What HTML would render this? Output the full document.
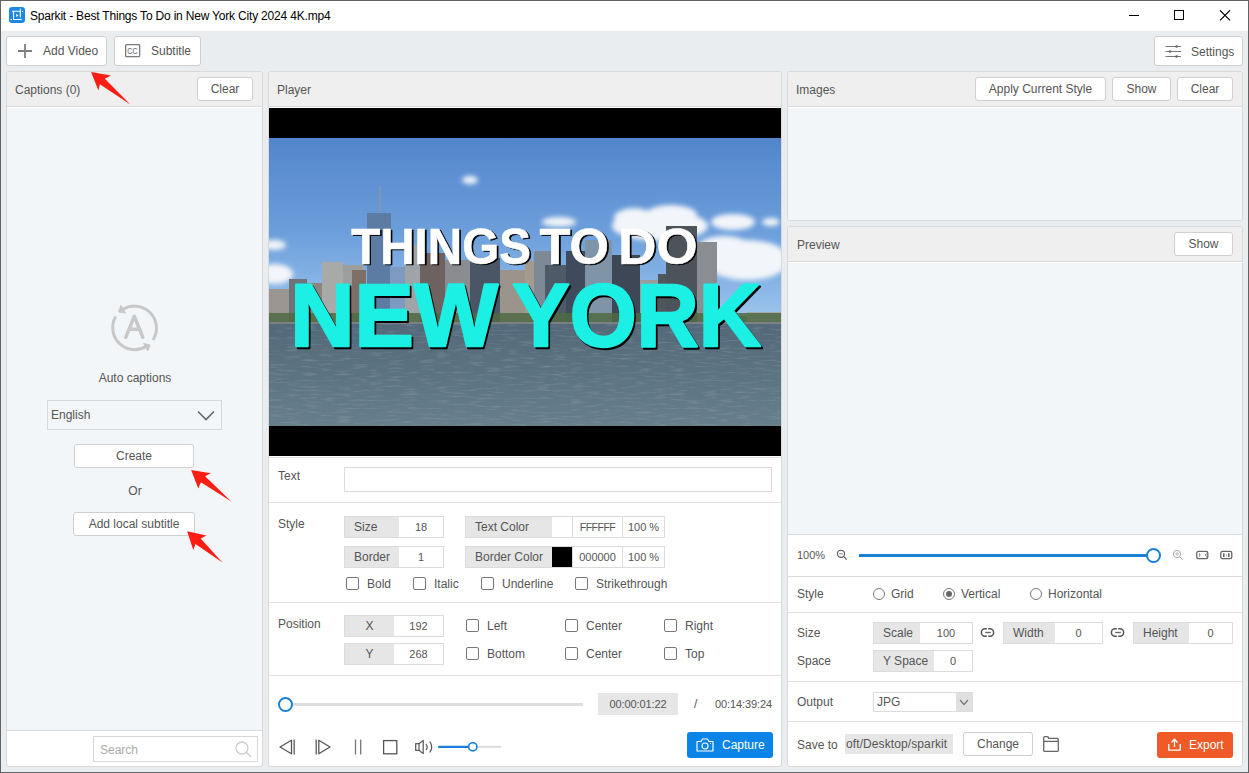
<!DOCTYPE html>
<html><head><meta charset="utf-8">
<style>
*{box-sizing:border-box;margin:0;padding:0}
html,body{width:1249px;height:773px;overflow:hidden}
body{position:relative;background:#e9edf0;font-family:"Liberation Sans",sans-serif;font-size:12px;color:#555}
.a{position:absolute}
.win{left:0;top:0;width:1249px;height:773px;border:1px solid #606264;pointer-events:none;z-index:50}
.title{left:1px;top:1px;width:1247px;height:30px;background:#fff}
.btn{position:absolute;background:#fff;border:1px solid #cfcfcf;border-radius:3px;color:#555;white-space:nowrap}
.panel{position:absolute;border:1px solid #d9d9d9;border-radius:3px;overflow:hidden;background:#fff}
.hdr{position:absolute;left:0;top:0;right:0;height:35px;background:#efefef;border-bottom:1px solid #dadada}
.cnt{position:absolute;left:0;right:0;background:#f3f6f9}
.t{position:absolute;white-space:nowrap;line-height:14px}
.sep{position:absolute;left:0;right:0;height:1px;background:#e2e2e2}
.lbox{position:absolute;border:1px solid #dcdcdc;background:#fff}
.lbl{position:absolute;left:0;top:0;bottom:0;background:#e6e6e6;text-align:left;padding-left:9px;line-height:20px}
.lc{text-align:center;padding-left:0}
.val{font-size:11px}
.val{position:absolute;top:0;bottom:0;right:0;text-align:center;line-height:20px;color:#555}
.cb{position:absolute;width:13px;height:13px;border:1px solid #777;border-radius:2px;background:#fff}
.rd{position:absolute;width:12px;height:12px;border:1px solid #777;border-radius:50%;background:#fff}
</style></head><body>
<div class="a win"></div>
<div class="a title"></div>

<!-- title bar -->
<svg class="a" style="left:9px;top:7px" width="16" height="16" viewBox="0 0 16 16">
<rect x="0" y="0" width="16" height="16" rx="3.2" fill="#1b88e3"/>
<path d="M3 4.3H11.5M11.3 3V10.5M4.5 4.3V12.5H12.8" fill="none" stroke="#fff" stroke-width="1.1"/>
<path d="M7.1 6.9V10.1L9.7 8.5Z" fill="#fff"/>
<circle cx="11.4" cy="2.2" r="0.65" fill="#fff"/><circle cx="13.6" cy="4.4" r="0.6" fill="#fff"/><circle cx="2.2" cy="12.5" r="0.7" fill="#fff"/>
</svg>
<div class="t" style="left:30px;top:9px;color:#000;letter-spacing:-0.19px">Sparkit - Best Things To Do in New York City 2024 4K.mp4</div>
<svg class="a" style="left:1129px;top:10px" width="110" height="12" viewBox="0 0 110 12">
<path d="M0 5.5H10" stroke="#000" stroke-width="1"/>
<rect x="45.5" y="0.5" width="9" height="9" fill="none" stroke="#000" stroke-width="1"/>
<path d="M91 0.3L101 10.3M101 0.3L91 10.3" stroke="#000" stroke-width="1.15"/>
</svg>

<!-- toolbar -->
<div class="btn" style="left:6px;top:36px;width:101px;height:30px">
 <svg class="a" style="left:11px;top:7px" width="14" height="14" viewBox="0 0 14 14"><path d="M7 0V14M0 7H14" stroke="#7d7d7d" stroke-width="1.8"/></svg>
 <div class="t" style="left:36px;top:7px">Add Video</div>
</div>
<div class="btn" style="left:114px;top:36px;width:87px;height:30px">
 <svg class="a" style="left:10px;top:7px" width="17" height="14" viewBox="0 0 17 14"><rect x="0.65" y="0.65" width="14" height="12" rx="0.8" fill="none" stroke="#7a7a7a" stroke-width="1.3"/><text x="7.6" y="10.2" font-family="Liberation Sans" font-size="9.6" fill="#666" text-anchor="middle" textLength="10.5" lengthAdjust="spacingAndGlyphs">CC</text></svg>
 <div class="t" style="left:36px;top:7px">Subtitle</div>
</div>
<div class="btn" style="left:1154px;top:36px;width:89px;height:30px">
 <svg class="a" style="left:10px;top:8px" width="17" height="14" viewBox="0 0 17 14">
 <path d="M0.5 1.5H16M0.5 6.5H16M0.5 11.5H16" stroke="#777" stroke-width="1.2"/>
 <circle cx="11.5" cy="1.5" r="1.3" fill="#666"/><circle cx="5" cy="6.5" r="1.3" fill="#666"/><circle cx="11.5" cy="11.5" r="1.3" fill="#666"/>
 </svg>
 <div class="t" style="left:36px;top:8px">Settings</div>
</div>

<!-- left panel -->
<div class="panel" style="left:6px;top:71px;width:257px;height:696px">
 <div class="hdr"><div class="t" style="left:8px;top:11px">Captions (0)</div>
  <div class="btn" style="left:190px;top:5px;width:56px;height:24px"><div class="t" style="left:0;right:0;text-align:center;top:4px">Clear</div></div>
 </div>
 <div class="cnt" style="top:36px;height:623px;border-bottom:1px solid #dadada">
  <svg class="a" style="left:99px;top:192px" width="56" height="56" viewBox="0 0 56 56">
   <path d="M16.5 9.6 A22 22 0 0 1 47.55 39" fill="none" stroke="#c8c8c8" stroke-width="3" stroke-linecap="round"/>
   <path d="M9.08 17.67 A22 22 0 0 0 40.5 46.2" fill="none" stroke="#c8c8c8" stroke-width="3" stroke-linecap="round"/>
   <path d="M14.9 5.3 L12.6 12 L19.6 13 Z" fill="#c8c8c8" stroke="#c8c8c8" stroke-width="1" stroke-linejoin="round"/>
   <path d="M37.6 43.5 L44.2 45 L41.6 51 Z" fill="#c8c8c8" stroke="#c8c8c8" stroke-width="1" stroke-linejoin="round"/>
   <path d="M19.8 37.3 L28.3 16.2 L36.8 37.3 M22.8 29.3H33.8" fill="none" stroke="#c8c8c8" stroke-width="3.5" stroke-linecap="round" stroke-linejoin="round"/>
  </svg>
  <div class="t" style="left:1px;width:254px;text-align:center;top:263px">Auto captions</div>
  <div class="a" style="left:40px;top:292px;width:175px;height:30px;border:1px solid #d8d8d8;background:#f3f6f9">
   <div class="t" style="left:3px;top:7px">English</div>
   <svg class="a" style="left:149px;top:9px" width="18" height="11" viewBox="0 0 18 11"><path d="M1 1.5L9 9.5L17 1.5" fill="none" stroke="#666" stroke-width="1.6"/></svg>
  </div>
  <div class="btn" style="left:67px;top:336px;width:120px;height:24px"><div class="t" style="left:0;right:0;text-align:center;top:4px">Create</div></div>
  <div class="t" style="left:1px;width:254px;text-align:center;top:376px">Or</div>
  <div class="btn" style="left:66px;top:404px;width:122px;height:24px"><div class="t" style="left:0;right:0;text-align:center;top:4px">Add local subtitle</div></div>
 </div>
 <div class="a" style="left:86px;top:664px;width:165px;height:26px;border:1px solid #d8d8d8;background:#fff">
  <div class="t" style="left:6px;top:6px;color:#aaa">Search</div>
  <svg class="a" style="left:141px;top:4px" width="18" height="17" viewBox="0 0 18 17"><circle cx="7" cy="7" r="6" fill="none" stroke="#ccc" stroke-width="1.3"/><path d="M11.3 11.3L16 16" stroke="#ccc" stroke-width="1.3"/></svg>
 </div>
</div>

<!-- player panel -->
<div class="panel" style="left:268px;top:71px;width:514px;height:696px">
 <div class="hdr"><div class="t" style="left:8px;top:11px">Player</div></div>
 <div class="a" id="video" style="left:0;top:36px;width:512px;height:348px;background:#000;overflow:hidden"><svg class="a" style="left:0;top:0" width="512" height="348" viewBox="0 0 512 348">
<defs>
 <linearGradient id="sky" x1="0" y1="30" x2="0" y2="216" gradientUnits="userSpaceOnUse">
  <stop offset="0" stop-color="#5385cc"/><stop offset="0.5" stop-color="#6c9edb"/><stop offset="0.85" stop-color="#8ebae8"/><stop offset="1" stop-color="#a6c8ec"/>
 </linearGradient>
 <linearGradient id="water" x1="0" y1="216" x2="0" y2="318" gradientUnits="userSpaceOnUse">
  <stop offset="0" stop-color="#53697a"/><stop offset="0.5" stop-color="#5c7381"/><stop offset="1" stop-color="#677e8b"/>
 </linearGradient>
 <filter id="blur" x="-50%" y="-50%" width="200%" height="200%"><feGaussianBlur stdDeviation="2.5"/></filter>
 <filter id="noise" filterUnits="userSpaceOnUse" x="0" y="216" width="512" height="102"><feTurbulence type="fractalNoise" baseFrequency="0.06 0.5" numOctaves="2" seed="3"/><feColorMatrix values="0 0 0 0 0.75  0 0 0 0 0.82  0 0 0 0 0.86  0 0 0 1.4 -0.7"/></filter>
</defs>
<rect x="0" y="30" width="512" height="288" fill="url(#sky)"/>
<g filter="url(#blur)" fill="#f2f5f9">
 <ellipse cx="391" cy="118" rx="48" ry="15"/><ellipse cx="365" cy="110" rx="20" ry="10"/><ellipse cx="402" cy="107" rx="26" ry="10"/>
 <ellipse cx="464" cy="114" rx="22" ry="8"/>
 <ellipse cx="478" cy="152" rx="42" ry="20"/><ellipse cx="455" cy="138" rx="25" ry="10"/>
 <ellipse cx="290" cy="114" rx="17" ry="5"/>
 <ellipse cx="502" cy="114" rx="9" ry="4"/>
 <ellipse cx="201" cy="72" rx="8" ry="4"/>
 <ellipse cx="5" cy="137" rx="12" ry="5"/><ellipse cx="6" cy="166" rx="18" ry="10"/>
</g>
<rect x="0" y="181" width="26" height="35" fill="#9a9590"/><rect x="20" y="171" width="18" height="45" fill="#6f7377"/><rect x="38" y="175" width="15" height="41" fill="#8c8580"/><rect x="53" y="154" width="21" height="62" fill="#a8aaa8"/><rect x="74" y="157" width="21" height="59" fill="#9d9f9e"/><rect x="83" y="162" width="14" height="54" fill="#7d6e66"/><rect x="98" y="105" width="24" height="111" fill="#5d7ca3"/><rect x="121" y="159" width="15" height="57" fill="#7e9ac0"/><rect x="136" y="137" width="15" height="79" fill="#9fa4a9"/><rect x="151" y="145" width="25" height="71" fill="#6e6260"/><rect x="176" y="152" width="25" height="64" fill="#8a8c90"/><rect x="201" y="150" width="30" height="66" fill="#4a5566"/><rect x="231" y="162" width="25" height="54" fill="#9a948c"/><rect x="256" y="153" width="20" height="63" fill="#a39b90"/><rect x="265" y="143" width="17" height="73" fill="#7d8a96"/><rect x="276" y="157" width="21" height="59" fill="#4e5a68"/><rect x="297" y="143" width="19" height="73" fill="#3f4a5c"/><rect x="316" y="132" width="27" height="84" fill="#8094a8"/><rect x="343" y="147" width="28" height="69" fill="#3d4755"/><rect x="371" y="172" width="18" height="44" fill="#9a9c9e"/><rect x="389" y="166" width="8" height="50" fill="#50565e"/><rect x="397" y="118" width="31" height="98" fill="#4d535b"/><rect x="428" y="134" width="20" height="82" fill="#8a8e92"/><rect x="448" y="208" width="30" height="8" fill="#6f7f6a"/><rect x="478" y="204" width="34" height="12" fill="#a4a8ab"/>
<path d="M111 78V105" stroke="#8a96a6" stroke-width="1.6"/>
<rect x="0" y="205" width="512" height="11" fill="#4f6a43" opacity="0.85"/>
<rect x="0" y="214" width="512" height="2" fill="#7a8084"/>
<rect x="0" y="216" width="512" height="102" fill="url(#water)"/>
<rect x="0" y="216" width="512" height="102" filter="url(#noise)" opacity="0.3"/>
<g font-family="Liberation Sans" font-weight="bold" stroke-linejoin="round"><text x="83.87" y="157.20" font-size="49.8" textLength="179.85" lengthAdjust="spacingAndGlyphs" fill="#000" stroke="#000" stroke-width="0.6">THINGS</text><text x="272.21" y="157.20" font-size="49.8" textLength="69.54" lengthAdjust="spacingAndGlyphs" fill="#000" stroke="#000" stroke-width="0.6">TO</text><text x="350.90" y="157.20" font-size="49.8" textLength="79.34" lengthAdjust="spacingAndGlyphs" fill="#000" stroke="#000" stroke-width="0.6">DO</text><text x="22.97" y="239.80" font-size="88.1" textLength="207.61" lengthAdjust="spacingAndGlyphs" fill="#000" stroke="#000" stroke-width="2.4">NEW</text><text x="244.92" y="239.80" font-size="88.1" textLength="248.72" lengthAdjust="spacingAndGlyphs" fill="#000" stroke="#000" stroke-width="2.4">YORK</text><text x="82.17" y="155.5" font-size="49.8" textLength="179.85" lengthAdjust="spacingAndGlyphs" fill="#fff" stroke="#fff" stroke-width="0.6">THINGS</text><text x="270.51" y="155.5" font-size="49.8" textLength="69.54" lengthAdjust="spacingAndGlyphs" fill="#fff" stroke="#fff" stroke-width="0.6">TO</text><text x="349.2" y="155.5" font-size="49.8" textLength="79.34" lengthAdjust="spacingAndGlyphs" fill="#fff" stroke="#fff" stroke-width="0.6">DO</text><text x="21.27" y="238.1" font-size="88.1" textLength="207.61" lengthAdjust="spacingAndGlyphs" fill="#1cf0e4" stroke="#1cf0e4" stroke-width="2.4">NEW</text><text x="243.22" y="238.1" font-size="88.1" textLength="248.72" lengthAdjust="spacingAndGlyphs" fill="#1cf0e4" stroke="#1cf0e4" stroke-width="2.4">YORK</text></g>
</svg></div>
 <div class="sep" style="top:385px;background:#dfe1e4"></div>
 <div class="t" style="left:9px;top:397px">Text</div>
 <div class="a" style="left:75px;top:395px;width:428px;height:25px;border:1px solid #dcdcdc"></div>
 <div class="sep" style="top:430px"></div>
 <div class="t" style="left:9px;top:445px">Style</div>
 <div class="lbox" style="left:75px;top:444px;width:100px;height:22px"><div class="lbl" style="width:54px">Size</div><div class="val" style="left:54px">18</div></div>
 <div class="lbox" style="left:75px;top:474px;width:100px;height:22px"><div class="lbl" style="width:54px">Border</div><div class="val" style="left:54px">1</div></div>
 <div class="lbox" style="left:196px;top:444px;width:200px;height:22px">
  <div class="lbl" style="width:86px">Text Color</div>
  <div class="a" style="left:86px;top:0;bottom:0;width:21px;border-right:1px solid #dcdcdc"></div>
  <div class="val" style="left:107px;width:50px;right:auto;border-right:1px solid #dcdcdc;letter-spacing:-0.5px;font-size:10.5px">FFFFFF</div>
  <div class="val" style="left:157px">100 %</div>
 </div>
 <div class="lbox" style="left:196px;top:474px;width:200px;height:22px">
  <div class="lbl" style="width:86px">Border Color</div>
  <div class="a" style="left:86px;top:0;bottom:0;width:21px;background:#000;border-right:1px solid #dcdcdc"></div>
  <div class="val" style="left:107px;width:50px;right:auto;border-right:1px solid #dcdcdc">000000</div>
  <div class="val" style="left:157px">100 %</div>
 </div>
 <div class="cb" style="left:77px;top:505px"></div><div class="t" style="left:98px;top:505px">Bold</div>
 <div class="cb" style="left:144px;top:505px"></div><div class="t" style="left:165px;top:505px">Italic</div>
 <div class="cb" style="left:212px;top:505px"></div><div class="t" style="left:233px;top:505px">Underline</div>
 <div class="cb" style="left:306px;top:505px"></div><div class="t" style="left:327px;top:505px">Strikethrough</div>
 <div class="sep" style="top:530px"></div>
 <div class="t" style="left:9px;top:545px">Position</div>
 <div class="lbox" style="left:75px;top:543px;width:100px;height:22px"><div class="lbl lc" style="width:49px">X</div><div class="val" style="left:49px">192</div></div>
 <div class="lbox" style="left:75px;top:571px;width:100px;height:22px"><div class="lbl lc" style="width:49px">Y</div><div class="val" style="left:49px">268</div></div>
 <div class="cb" style="left:197px;top:547px"></div><div class="t" style="left:218px;top:547px">Left</div>
 <div class="cb" style="left:296px;top:547px"></div><div class="t" style="left:317px;top:547px">Center</div>
 <div class="cb" style="left:395px;top:547px"></div><div class="t" style="left:416px;top:547px">Right</div>
 <div class="cb" style="left:197px;top:575px"></div><div class="t" style="left:218px;top:575px">Bottom</div>
 <div class="cb" style="left:296px;top:575px"></div><div class="t" style="left:317px;top:575px">Center</div>
 <div class="cb" style="left:395px;top:575px"></div><div class="t" style="left:416px;top:575px">Top</div>
 <div class="sep" style="top:603px"></div>
 <!-- seek -->
 <div class="a" style="left:16px;top:631px;width:298px;height:3px;background:#dedede"></div>
 <div class="a" style="left:9px;top:625px;width:15px;height:15px;border:2.5px solid #1a7fd6;border-radius:50%;background:#fff"></div>
 <div class="a" style="left:329px;top:621px;width:80px;height:22px;background:#e6e6e6"><div class="t" style="left:0;right:0;text-align:center;top:4px;font-size:11px;letter-spacing:-0.1px">00:00:01:22</div></div>
 <div class="t" style="left:425px;top:625px">/</div>
 <div class="t" style="left:446px;top:625px;font-size:11px;letter-spacing:-0.1px">00:14:39:24</div>
 <!-- controls -->
 
 <div class="a" style="left:418px;top:660px;width:86px;height:26px;background:#0a84e6;border-radius:3px">
  <svg class="a" style="left:9px;top:6px" width="18" height="14" viewBox="0 0 18 14"><path d="M1 3.5H5L6.5 1H11.5L13 3.5H17V13H1Z" fill="none" stroke="#fff" stroke-width="1.2" stroke-linejoin="round"/><circle cx="9" cy="8" r="3" fill="none" stroke="#fff" stroke-width="1.2"/><circle cx="14.5" cy="5.5" r="0.6" fill="#fff"/></svg>
  <div class="t" style="left:35px;top:6px;color:#fff">Capture</div>
 </div>
</div>

<!-- images panel -->
<div class="panel" style="left:787px;top:71px;width:456px;height:150px">
 <div class="hdr"><div class="t" style="left:8px;top:11px">Images</div>
  <div class="btn" style="left:187px;top:5px;width:131px;height:24px"><div class="t" style="left:0;right:0;text-align:center;top:4px">Apply Current Style</div></div>
  <div class="btn" style="left:324px;top:5px;width:59px;height:24px"><div class="t" style="left:0;right:0;text-align:center;top:4px">Show</div></div>
  <div class="btn" style="left:389px;top:5px;width:56px;height:24px"><div class="t" style="left:0;right:0;text-align:center;top:4px">Clear</div></div>
 </div>
 <div class="cnt" style="top:36px;bottom:0"></div>
</div>
<!-- preview panel -->
<div class="panel" style="left:787px;top:226px;width:456px;height:541px">
 <div class="hdr"><div class="t" style="left:9px;top:11px">Preview</div>
  <div class="btn" style="left:386px;top:5px;width:59px;height:24px"><div class="t" style="left:0;right:0;text-align:center;top:4px">Show</div></div>
 </div>
 <div class="cnt" style="top:36px;height:272px;border-bottom:1px solid #dadada"></div>
 <div class="t" style="left:9px;top:321px;font-size:11px">100%</div>
 <svg class="a" style="left:48px;top:322px" width="12" height="12" viewBox="0 0 12 12"><circle cx="5" cy="4.8" r="3.6" fill="none" stroke="#555" stroke-width="1.1"/><path d="M7.6 7.4L10.6 10.6" stroke="#555" stroke-width="1.1"/><path d="M3.2 4.8H6.8" stroke="#999" stroke-width="1.3"/></svg>
 <div class="a" style="left:71px;top:327px;width:296px;height:3px;background:#1a7fd6"></div>
 <div class="a" style="left:358px;top:321px;width:15px;height:15px;border:2.5px solid #1a7fd6;border-radius:50%;background:#fff"></div>
 <svg class="a" style="left:384px;top:322px" width="12" height="12" viewBox="0 0 12 12"><circle cx="5" cy="5" r="3.7" fill="none" stroke="#aaa" stroke-width="1"/><path d="M7.7 7.7L10.8 10.8" stroke="#aaa" stroke-width="1"/><path d="M3.3 5H6.7M5 3.3V6.7" stroke="#bbb" stroke-width="1.2"/></svg>
 <svg class="a" style="left:407px;top:322px" width="14" height="12" viewBox="0 0 14 12"><rect x="1.8" y="2.4" width="11" height="7.3" rx="1.6" fill="none" stroke="#666" stroke-width="1.3"/><path d="M3.9 4.2L4.8 5V7.1L3.9 7.9M11.7 4.2L10.8 5V7.1L11.7 7.9" fill="none" stroke="#777" stroke-width="1"/></svg>
 <svg class="a" style="left:431px;top:322px" width="14" height="12" viewBox="0 0 14 12"><rect x="1.8" y="2.4" width="11" height="7.3" rx="1.6" fill="none" stroke="#666" stroke-width="1.3"/><path d="M4.8 4.3V8M9.8 4.3V8" stroke="#555" stroke-width="1.4"/><path d="M7.3 4.8V7.6" stroke="#bbb" stroke-width="0.9"/></svg>
 <div class="sep" style="top:349px;background:#dadada"></div>
 <div class="t" style="left:9px;top:360px">Style</div>
 <div class="rd" style="left:85px;top:361px"></div><div class="t" style="left:103px;top:360px">Grid</div>
 <div class="rd" style="left:155px;top:361px"></div><div class="a" style="left:158px;top:364px;width:6px;height:6px;border-radius:50%;background:#666"></div><div class="t" style="left:173px;top:360px">Vertical</div>
 <div class="rd" style="left:242px;top:361px"></div><div class="t" style="left:260px;top:360px">Horizontal</div>
 <div class="sep" style="top:385px"></div>
 <div class="t" style="left:9px;top:399px">Size</div>
 <div class="lbox" style="left:85px;top:395px;width:100px;height:22px"><div class="lbl" style="width:46px">Scale</div><div class="val" style="left:46px">100</div></div>
 <svg class="a" style="left:192px;top:401px" width="16" height="10" viewBox="0 0 16 10"><path d="M6.8 0.75H5.1A3.75 3.75 0 0 0 5.1 8.25H6.8M8.2 0.75H9.9A3.75 3.75 0 0 1 9.9 8.25H8.2" fill="none" stroke="#555" stroke-width="1.5"/><path d="M5.2 4.5H10.8" stroke="#666" stroke-width="1.4"/></svg>
 <div class="lbox" style="left:215px;top:395px;width:100px;height:22px"><div class="lbl" style="width:51px">Width</div><div class="val" style="left:51px">0</div></div>
 <svg class="a" style="left:322px;top:401px" width="16" height="10" viewBox="0 0 16 10"><path d="M6.8 0.75H5.1A3.75 3.75 0 0 0 5.1 8.25H6.8M8.2 0.75H9.9A3.75 3.75 0 0 1 9.9 8.25H8.2" fill="none" stroke="#555" stroke-width="1.5"/><path d="M5.2 4.5H10.8" stroke="#666" stroke-width="1.4"/></svg>
 <div class="lbox" style="left:345px;top:395px;width:100px;height:22px"><div class="lbl" style="width:55px">Height</div><div class="val" style="left:55px">0</div></div>
 <div class="t" style="left:9px;top:427px">Space</div>
 <div class="lbox" style="left:85px;top:423px;width:100px;height:22px"><div class="lbl" style="width:60px">Y Space</div><div class="val" style="left:60px">0</div></div>
 <div class="sep" style="top:454px"></div>
 <div class="t" style="left:9px;top:468px">Output</div>
 <div class="a" style="left:85px;top:465px;width:100px;height:20px;border:1px solid #dcdcdc">
  <div class="t" style="left:3px;top:2px">JPG</div>
  <div class="a" style="right:0;top:0;bottom:0;width:16px;background:#e0e0e0"><svg class="a" style="left:3px;top:6px" width="10" height="7" viewBox="0 0 10 7"><path d="M1 1L5 5.5L9 1" fill="none" stroke="#777" stroke-width="1.2"/></svg></div>
 </div>
 <div class="sep" style="top:494px"></div>
 <div class="t" style="left:9px;top:511px">Save to</div>
 <div class="a" style="left:57px;top:507px;width:108px;height:20px;background:#e6e6e6;overflow:hidden"><div class="t" style="left:1px;top:3px;letter-spacing:0.1px">oft/Desktop/sparkit</div></div>
 <div class="btn" style="left:175px;top:505px;width:70px;height:24px"><div class="t" style="left:0;right:0;text-align:center;top:4px">Change</div></div>
 <svg class="a" style="left:254px;top:508px" width="18" height="18" viewBox="0 0 18 18"><path d="M1.7 15.6V2.6Q1.7 1.6 2.7 1.6H5.3Q6 1.6 6.3 2.4L6.6 3.3H15.3Q16.3 3.3 16.3 4.3V15.6Q16.3 16.3 15.6 16.3H2.4Q1.7 16.3 1.7 15.6ZM1.7 6.4H16.3" fill="none" stroke="#666" stroke-width="1.3"/></svg>
 <div class="a" style="left:369px;top:505px;width:76px;height:26px;background:#f05a28;border-radius:3px">
  <svg class="a" style="left:11px;top:6px" width="13" height="13" viewBox="0 0 13 13"><path d="M0.8 6V12.2H12.2V6" fill="none" stroke="#fff" stroke-width="1.3"/><path d="M6.5 9V1.5M3.5 4.5L6.5 1.3L9.5 4.5" fill="none" stroke="#fff" stroke-width="1.3"/></svg>
  <div class="t" style="left:32px;top:6px;color:#fff">Export</div>
 </div>
</div>
<svg class="a" style="left:269px;top:730px;z-index:5" width="240" height="30" viewBox="0 0 240 30">
  <path d="M11 17L22.5 10.2V23.8Z" fill="none" stroke="#555" stroke-width="1.3" stroke-linejoin="round"/><path d="M25.2 9.5V24.5" stroke="#666" stroke-width="1.4"/>
  <path d="M47.2 9.5V24.5" stroke="#666" stroke-width="1.4"/><path d="M49.8 10.2L61 17L49.8 23.8Z" fill="none" stroke="#555" stroke-width="1.3" stroke-linejoin="round"/>
  <path d="M86.5 9.5V24.5M91.7 9.5V24.5" stroke="#777" stroke-width="1.3"/>
  <rect x="114.6" y="10.6" width="13.2" height="13.2" fill="none" stroke="#555" stroke-width="1.3"/>
  <rect x="146.7" y="13.7" width="3.3" height="6.6" fill="none" stroke="#555" stroke-width="1.2"/>
  <path d="M150 13.7L154.2 10.4V23.6L150 20.3" fill="none" stroke="#555" stroke-width="1.2" stroke-linejoin="round"/>
  <path d="M157 14Q159.3 17 157 20M160.8 11.5Q164.6 17 160.8 22.5" fill="none" stroke="#555" stroke-width="1.2"/>
  <path d="M169.2 16.8H203" stroke="#1a7fd6" stroke-width="2.3"/>
  <path d="M208 16.8H232" stroke="#dcdcdc" stroke-width="2"/>
  <circle cx="203.8" cy="16.8" r="4.1" fill="#fff" stroke="#1a7fd6" stroke-width="1.6"/>
 </svg>
<!-- arrows -->
<svg class="a" style="left:0;top:0;z-index:40" width="1249" height="773" viewBox="0 0 1249 773">
 <path d="M91.1 72 L110.9 75.5 L104.8 78.7 L130.4 104.6 L99.8 84.2 L98.4 90.6 Z" fill="#fe1d12"/>
 <path d="M191.1 470 L210.9 473.3 L205.1 476.2 L231.3 501.4 L200.9 482.3 L198.3 488.5 Z" fill="#fe1d12"/>
 <path d="M187.1 531.3 L206.5 535.4 L200.7 538.4 L222.4 562.4 L195.5 544 L193.3 550.1 Z" fill="#fe1d12"/>
</svg>
</body></html>
